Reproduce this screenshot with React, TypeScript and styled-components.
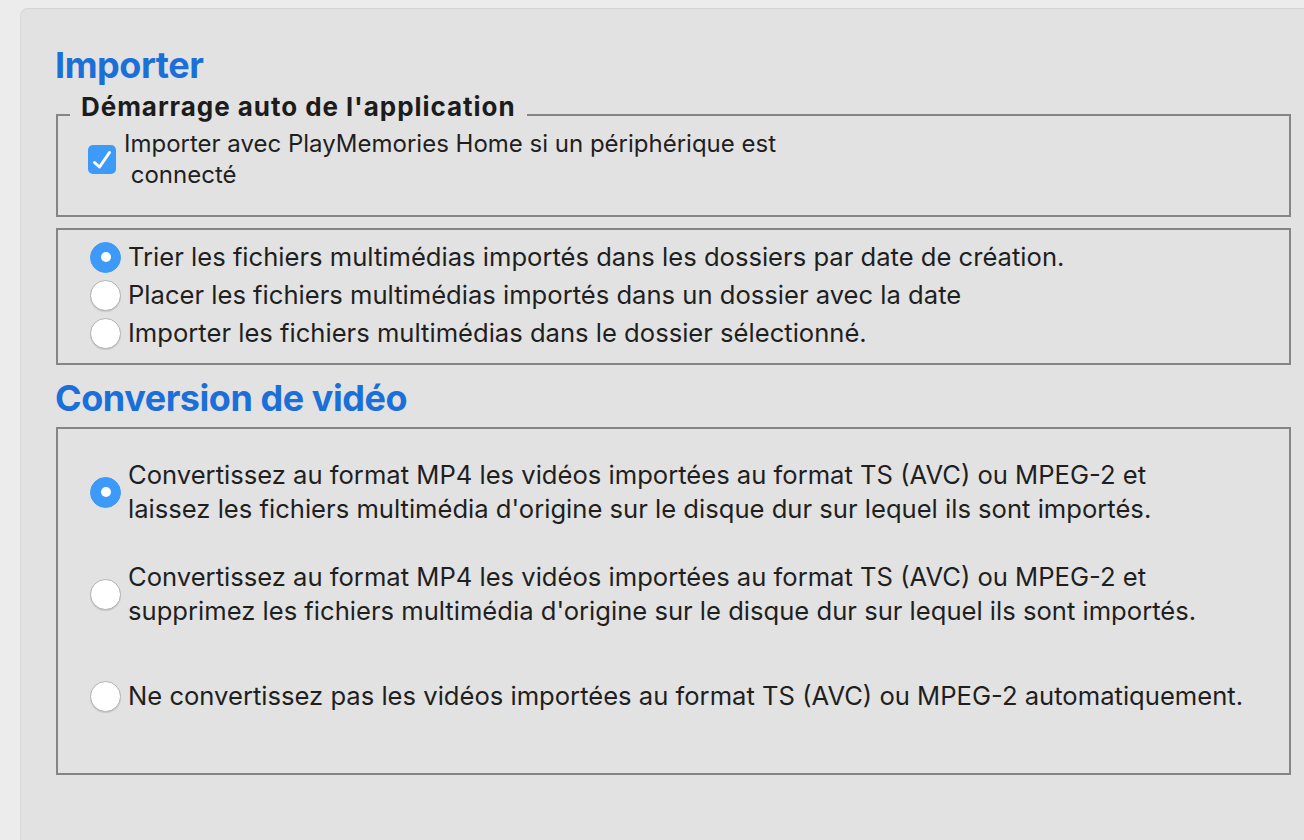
import React from 'react';
import styled, { createGlobalStyle } from 'styled-components';

const GlobalStyle = createGlobalStyle`
    html, body {
        margin: 0;
        padding: 0;
        background-color: #ECECEC;
    }
    body {
        font-family: Inter, "Liberation Sans", sans-serif;
        color: #1F1F1F;
    }
`;

const Page = styled.div`
    min-height: 100vh;
    box-sizing: border-box;
    padding: 8px 0 0 20px;
`;

const Panel = styled.div`
    min-height: 832px;
    box-sizing: border-box;
    background-color: #E2E2E2;
    border-top: 1px solid #D4D4D4;
    border-left: 1px solid #DADADA;
    border-top-left-radius: 8px;
    padding: 36px 13px 0 35px;
`;

const Heading = styled.h2<{ $gap?: number }>`
    margin: ${(p) => p.$gap ?? 0}px 0 0 -1px;
    font-size: 36px;
    line-height: 40px;
    font-weight: 700;
    color: #1A6FD8;
    letter-spacing: -0.45px;
`;

const Box = styled.div<{ $gap: number; $pad: string }>`
    margin-top: ${(p) => p.$gap}px;
    border: 2px solid #858585;
    padding: ${(p) => p.$pad};
`;

const Legend = styled.div`
    display: block;
    width: fit-content;
    margin: -24px 0 0 12px;
    padding: 0 11px;
    background-color: #E2E2E2;
    font-size: 26px;
    line-height: 30px;
    font-weight: 700;
    letter-spacing: 0.95px;
    color: #1C1C1C;
`;

const CheckRow = styled.label`
    display: flex;
    align-items: center;
    gap: 8px;
    margin-top: 6px;
    padding-left: 30px;
`;

const CheckBox = styled.span`
    flex: none;
    width: 28px;
    height: 29px;
    border-radius: 5px;
    background-color: #3D9AF8;
    display: flex;
`;

const Text = styled.span<{ $lh: number; $size?: number }>`
    font-size: ${(p) => p.$size ?? 24}px;
    line-height: ${(p) => p.$lh}px;
`;

const OptionRow = styled.label<{ $h: number }>`
    display: flex;
    align-items: center;
    gap: 7px;
    height: ${(p) => p.$h}px;
    padding-left: 32px;
`;

const Radio = styled.span<{ $on?: boolean }>`
    flex: none;
    width: 31px;
    height: 31px;
    box-sizing: border-box;
    border-radius: 50%;
    display: flex;
    align-items: center;
    justify-content: center;
    background-color: ${(p) => (p.$on ? '#3D9AF8' : '#FFFFFF')};
    border: 1px solid ${(p) => (p.$on ? '#3D9AF8' : '#B4B4B4')};
    box-shadow: ${(p) => (p.$on ? 'none' : '0 1px 1px rgba(0, 0, 0, 0.12)')};

    &::after {
        content: '';
        display: ${(p) => (p.$on ? 'block' : 'none')};
        width: 10px;
        height: 10px;
        border-radius: 50%;
        background-color: #FFFFFF;
    }
`;

const sortOptions = [
    'Trier les fichiers multimédias importés dans les dossiers par date de création.',
    'Placer les fichiers multimédias importés dans un dossier avec la date',
    'Importer les fichiers multimédias dans le dossier sélectionné.',
];

const videoOptions = [
    [
        'Convertissez au format MP4 les vidéos importées au format TS (AVC) ou MPEG-2 et',
        "laissez les fichiers multimédia d'origine sur le disque dur sur lequel ils sont importés.",
    ],
    [
        'Convertissez au format MP4 les vidéos importées au format TS (AVC) ou MPEG-2 et',
        "supprimez les fichiers multimédia d'origine sur le disque dur sur lequel ils sont importés.",
    ],
    ['Ne convertissez pas les vidéos importées au format TS (AVC) ou MPEG-2 automatiquement.'],
];

const App = () => {
    return (
        <>
            <GlobalStyle />
            <Page>
                <Panel>
                    <Heading>Importer</Heading>

                    <Box $gap={29} $pad="0 0 25px 0">
                        <Legend>Démarrage auto de l'application</Legend>
                        <CheckRow>
                            <CheckBox>
                                <svg width="28" height="29" viewBox="0 0 28 29">
                                    <polyline
                                        points="6.5,17.5 11.5,22 21.5,7.5"
                                        fill="none"
                                        stroke="#FFFFFF"
                                        strokeWidth="3"
                                        strokeLinecap="round"
                                        strokeLinejoin="round"
                                    />
                                </svg>
                            </CheckBox>
                            <Text $lh={31}>
                                Importer avec PlayMemories Home si un périphérique est
                                <br />
                                {'\u00a0connecté'}
                            </Text>
                        </CheckRow>
                    </Box>

                    <Box $gap={11} $pad="8px 0 11px 0">
                        {sortOptions.map((label, i) => (
                            <OptionRow key={label} $h={38}>
                                <Radio $on={i === 0} />
                                <Text $lh={38} $size={25.6}>{label}</Text>
                            </OptionRow>
                        ))}
                    </Box>

                    <Heading $gap={13}>Conversion de vidéo</Heading>

                    <Box $gap={9} $pad="12px 0 26px 0">
                        {videoOptions.map((lines, i) => (
                            <OptionRow key={i} $h={102}>
                                <Radio $on={i === 0} />
                                <Text $lh={34} $size={25.6}>
                                    {lines.map((line, j) => (
                                        <React.Fragment key={j}>
                                            {j > 0 && <br />}
                                            {line}
                                        </React.Fragment>
                                    ))}
                                </Text>
                            </OptionRow>
                        ))}
                    </Box>
                </Panel>
            </Page>
        </>
    );
};

export default App;
